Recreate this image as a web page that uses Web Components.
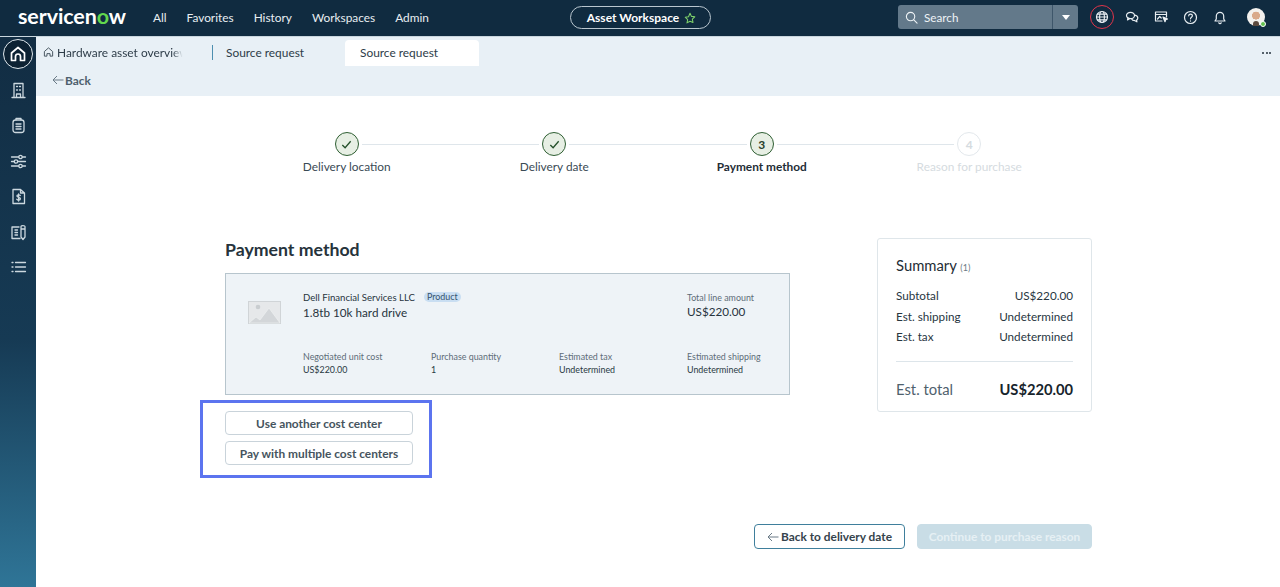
<!DOCTYPE html>
<html><head><meta charset="utf-8"><title>Payment method</title>
<style>
html,body{margin:0;height:100%;overflow:hidden;background:#fff}
body{font-family:Lato,"Liberation Sans",sans-serif;color:#293e40;display:flex;flex-direction:column;width:1280px;height:587px}
.row{display:flex;flex:1;min-height:0}
main{flex:1;display:flex;flex-direction:column;min-width:0}
</style></head><body>
<sn-header></sn-header>
<div class="row"><sn-sidebar></sn-sidebar>
<main><sn-tabs></sn-tabs><sn-stepper></sn-stepper><sn-content></sn-content></main></div>
<script>
function def(name,html){customElements.define(name,class extends HTMLElement{constructor(){super();this.attachShadow({mode:'open'}).innerHTML=html}})}
const ic='fill="none" stroke="currentColor" stroke-width="1.2" stroke-linecap="round" stroke-linejoin="round"';
def('sn-header',`<style>
:host{display:flex;align-items:center;height:36px;padding-bottom:0;background:#102b40;color:#e8eef2;flex:none;border-bottom:1px solid #c9d6de;position:relative;box-sizing:content-box}
.logo{font:700 21.500px/33px Lato,sans-serif;color:#fff;margin-left:18px;width:135px;letter-spacing:-.1px;height:36px}
.logo b{color:#62d84e;font-weight:700}
nav{display:flex;gap:20px;margin-top:-2px}nav span{white-space:nowrap;font-size:11.850px}
.ws{position:absolute;left:570px;top:6px;width:141px;height:23px;padding-left:2px;border:1px solid #b9c6cf;border-radius:12px;display:flex;align-items:center;justify-content:center;gap:5px;font-weight:700;font-size:12px;color:#fff;box-sizing:border-box}
.ws svg{color:#7fd36b}
.right{margin-left:auto;display:flex;align-items:center;margin-top:-2px}
.search{width:154px;height:24px;background:#63798a;border-radius:3px 0 0 3px;display:flex;align-items:center;gap:6px;padding-left:7px;box-sizing:border-box;font-size:11.700px;color:#eef3f6}
.dd{width:26px;height:24px;background:#63798a;border-left:1px solid #3e566a;border-radius:0 3px 3px 0;display:flex;align-items:center;justify-content:center;box-sizing:border-box;margin-right:12px}
.dd i{border:4.500px solid transparent;border-top:5px solid #fff;border-bottom:0;display:block}
.glob{width:24px;height:24px;border:1.500px solid #e0344a;border-radius:50%;box-sizing:border-box;display:flex;align-items:center;justify-content:center;margin-right:3px}
.ib{width:29.500px;display:flex;justify-content:center}
.av{width:18px;height:18px;margin:0 15px 0 12px;border-radius:50%;position:relative;background:radial-gradient(circle at 50% 42%,#d9a98a 0 28%,#f3f1ee 30%);}
.av::after{content:"";position:absolute;right:-1px;bottom:-1px;width:6px;height:6px;background:#62c04e;border-radius:50%;border:1px solid #fff;box-sizing:border-box}
.av::before{content:"";position:absolute;left:6px;bottom:0;width:6px;height:5px;background:#5c4a3e;border-radius:3px 3px 0 0}
</style>
<div class="logo">servicen<b>o</b>w</div>
<nav><span>All</span><span>Favorites</span><span>History</span><span>Workspaces</span><span>Admin</span></nav>
<div class="ws">Asset Workspace <svg width="12" height="12" viewBox="0 0 14 14" ${ic}><path d="M7 1.500l1.700 3.600 3.900.5-2.900 2.700.8 3.900L7 10.800l-3.500 1.900.8-3.900-2.900-2.700 3.900-.5z"/></svg></div>
<div class="right">
<div class="search"><svg width="13" height="13" viewBox="0 0 14 14" ${ic}><circle cx="6" cy="6" r="4.500"/><path d="M9.500 9.500L13 13"/></svg>Search</div>
<div class="dd"><i></i></div>
<div class="glob"><svg width="14" height="14" viewBox="0 0 14 14" ${ic} stroke-width="1"><circle cx="7" cy="7" r="5.500"/><ellipse cx="7" cy="7" rx="2.400" ry="5.500"/><path d="M1.500 7h11M2.300 4.200h9.400M2.300 9.800h9.400"/></svg></div>
<div class="ib"><svg width="14" height="14" viewBox="0 0 14 14" ${ic} stroke-width="1"><ellipse cx="5.500" cy="5.500" rx="4" ry="3.200"/><path d="M3 8l-.5 2 2-1.200"/><path d="M9.800 5.200c1.800.3 3 1.400 3 2.800 0 .9-.5 1.600-1.200 2.100l.3 1.700-1.900-1.100c-1.500 0-3-.7-3.500-2"/></svg></div>
<div class="ib"><svg width="15" height="14" viewBox="0 0 15 14" ${ic} stroke-width="1"><path d="M8 11H1.500V2h11v5"/><path d="M1.500 4.500h11M3.500 9l2.200-2.500 1.500 1.500"/><path d="M9 7l4.500 2-1.800.8-.7 1.900z" fill="#fff"/></svg></div>
<div class="ib"><svg width="15" height="15" viewBox="0 0 15 15" ${ic} stroke-width="1"><circle cx="7.500" cy="7.500" r="6"/><path d="M5.700 5.800c.1-2.200 3.700-2.100 3.700 0 0 1.500-1.900 1.400-1.900 3"/><path d="M7.500 10.900v.2"/></svg></div>
<div class="ib"><svg width="14" height="15" viewBox="0 0 14 15" ${ic} stroke-width="1"><path d="M2 11h10l-1.300-2V6a3.700 3.700 0 0 0-7.400 0v3z"/><path d="M5.800 12.800a1.300 1.300 0 0 0 2.400 0"/></svg></div>
<div class="av"></div>
</div>`);
const sideIcons=[
`<path d="M3.500 15.500v-14h9v14M1.500 15.500h13M6 15.500v-3.500h4v3.500M6 4.500h1M9 4.500h1M6 8h1M9 8h1" />`,
`<rect x="2.500" y="3" width="11" height="12.500" rx="2.500"/><path d="M5.500 3V1.500h5V3M5.500 7h5M5.500 9.500h5M5.500 12h5"/>`,
`<path d="M1 4h14M1 8.500h14M1 13h14"/><circle cx="10" cy="4" r="1.700" fill="#133149"/><circle cx="5.500" cy="8.500" r="1.700" fill="#133149"/><circle cx="10" cy="13" r="1.700" fill="#133149"/>`,
`<path d="M2.500 1.500h7.500l4 3.500v10.500H2.500zM10 1.500V5h4"/><path d="M9.800 7.500c-.6-1-3.400-1-3.400.6s3.500 1 3.500 2.700-3 1.600-3.700.4M8.100 6v7"/>`,
`<path d="M8.500 3H1.500v11.500h8M4.500 6h2.500M4.500 8.500h2.500M4.500 11h2.500"/><path d="M10.500 2.500c0-1.300 4-1.300 4 0V13l-2 2.500-2-2.500zM10.500 5h4"/>`,
`<path d="M5 3.500h10M5 8h10M5 12.500h10M1.500 3.500h1M1.500 8h1M1.500 12.500h1"/>`];
def('sn-sidebar',`<style>
:host{display:flex;flex-direction:column;align-items:center;width:36px;flex:none;background:linear-gradient(180deg,#122d43 0%,#163a54 55%,#2f7597 100%);color:#ccd8df;box-sizing:border-box;padding-top:2px}
.home{width:30px;height:30px;border:1px solid #dfe7ec;border-radius:50%;background:#0d2233;box-sizing:border-box;display:flex;align-items:center;justify-content:center;color:#fff;margin-bottom:12.500px}
svg{display:block;margin-bottom:18.600px;stroke-width:1.300}
.home svg{margin:0}
</style>
<div class="home"><svg width="18" height="18" viewBox="0 0 18 18" fill="none" stroke="currentColor" stroke-linejoin="round" style="stroke-width:1.700"><path d="M2.500 8L9 2.500 15.500 8v7.500h-4v-4a2.500 2.500 0 0 0-5 0v4h-4z"/></svg></div>
${sideIcons.map(p=>`<svg width="17" height="17" viewBox="0 0 16 17" ${ic}>${p}</svg>`).join('')}`);
def('sn-tabs',`<style>
:host{display:block;height:59px;background:#e8f0f6;flex:none;position:relative;font-size:11.900px;color:#2e3d49}
.bar{display:flex;height:30px;align-items:center}
.t1{width:147px;margin-left:7px;display:flex;align-items:center;gap:3px;white-space:nowrap;overflow:hidden;-webkit-mask:linear-gradient(90deg,#000 88%,transparent 95%)}
.t1 svg{flex:none}
.sep{width:1px;height:15px;background:#4d8fb0;margin-left:22px}
.t2{width:132px;padding-left:13px;white-space:nowrap;box-sizing:border-box}
.t3{width:134px;height:26px;background:#fff;border-radius:4px 4px 0 0;box-sizing:border-box;padding-left:15px;line-height:25px;align-self:flex-start;margin-top:3px}
.more{position:absolute;right:9px;top:15px;display:flex;gap:1.500px}.more i{width:2px;height:2px;background:#24323c;border-radius:50%}
.back{display:flex;align-items:center;gap:1px;margin:5px 0 0 16px;font-weight:700;font-size:11.900px;color:#4d5f6c;height:16px}
</style>
<div class="bar"><div class="t1"><svg width="11" height="12" viewBox="0 0 12 12" fill="none" stroke="#3b4a55" stroke-linejoin="round"><path d="M1.500 5.500L6 1.500l4.500 4v5h-2.800V7.800H4.300v2.700H1.500z"/></svg>Hardware asset overview</div><div class="sep"></div><div class="t2">Source request</div><div class="t3">Source request</div></div>
<div class="more"><i></i><i></i><i></i></div>
<div class="back"><svg width="12" height="10" viewBox="0 0 12 10" fill="none" stroke="#6b7b87"><path d="M11.500 5H1M5 1L1 5l4 4"/></svg>Back</div>`);
def('sn-step',`<style>
:host{display:flex;flex-direction:column;align-items:center;position:relative;font-size:11.850px;color:#3a4a55;white-space:nowrap}
.c{width:24px;height:24px;border:1.500px solid #2f5f33;background:#e7efe4;border-radius:50%;box-sizing:border-box;display:flex;align-items:center;justify-content:center;font-weight:700;font-size:12px;color:#27402a;margin-bottom:3px;position:relative;z-index:1}
:host([off]){color:#d5dbe0}:host([off]) .c{background:#fff;border-color:#e3e8ec;color:#d5dbe0}
:host([cur]){font-weight:700;color:#1f2d36}
:host([line])::after{content:"";position:absolute;left:calc(50% + 15px);width:calc(100% - 30px);top:12px;height:1px;background:#dfe6eb}
</style><div class="c"><slot name="i"></slot></div><slot></slot>`);
def('sn-stepper',`<style>
:host{display:grid;grid-template-columns:repeat(4,207.500px);justify-content:center;padding-top:36px;flex:none;height:47px;box-sizing:content-box}
</style>
<sn-step line><svg slot="i" width="13" height="13" viewBox="0 0 14 14" fill="none" stroke="#24502a" stroke-width="1.400"><path d="M2.500 7.500l3 3 6-7"/></svg>Delivery location</sn-step>
<sn-step line><svg slot="i" width="13" height="13" viewBox="0 0 14 14" fill="none" stroke="#24502a" stroke-width="1.400"><path d="M2.500 7.500l3 3 6-7"/></svg>Delivery date</sn-step>
<sn-step line cur><span slot="i">3</span>Payment method</sn-step>
<sn-step off><span slot="i">4</span>Reason for purchase</sn-step>`);
def('sn-field',`<style>:host{display:block;font-size:8.900px;line-height:13.500px;color:#5d6c77}.v{color:#293943;display:block}</style><slot></slot><span class="v"><slot name="v"></slot></span>`);
def('sn-line-card',`<style>
:host{display:block;width:565px;height:122px;box-sizing:border-box;background:#eef3f7;border:1px solid #b7c5cd;position:relative;padding:17px 0 0 22px;color:#27343d}
.top{display:flex;height:64px}
svg{margin:10px 0 0 0;flex:none}
.info{margin-left:22px;width:384px;font-size:9.600px}
.n{display:flex;align-items:center;gap:9px;height:12px}
.tag{background:#c9def2;border-radius:7px;padding:0 3px;line-height:10px;font-size:8.900px;color:#34536f}
.p{font-size:11.700px;margin-top:2px}
.tot{font-size:8.900px;color:#5d6c77;line-height:13px}.tot b{display:block;font-weight:400;font-size:11.700px;color:#27343d;line-height:15px}
.g{display:grid;grid-template-columns:repeat(4,128px);margin-left:55px;margin-top:-5.500px}
</style>
<div class="top"><svg width="33" height="23" viewBox="0 0 33 23"><rect x=".5" y=".5" width="32" height="22" fill="#e6e8ea" stroke="#d0d4d7"/><circle cx="10" cy="6" r="2.300" fill="#c9cdd0"/><path d="M1 22l7-6 4 3 9-12 11 15z" fill="#d3d6d9" stroke="#eef0f1" stroke-width=".7"/></svg>
<div class="info"><div class="n">Dell Financial Services LLC <span class="tag">Product</span></div><div class="p">1.8tb 10k hard drive</div></div>
<div class="tot">Total line amount<b>US$220.00</b></div></div>
<div class="g"><sn-field>Negotiated unit cost<span slot="v">US$220.00</span></sn-field><sn-field>Purchase quantity<span slot="v">1</span></sn-field><sn-field>Estimated tax<span slot="v">Undetermined</span></sn-field><sn-field>Estimated shipping<span slot="v">Undetermined</span></sn-field></div>`);
def('sn-btn',`<style>
:host{display:flex;align-items:center;justify-content:center;gap:2px;box-sizing:border-box;height:24px;border:1px solid #c9d3da;border-radius:4px;background:#fff;font-weight:700;font-size:11.900px;color:#46545e;white-space:nowrap}
:host([back]){border-color:#3f7f9c;height:25px;color:#35434c}
:host([dis]){background:#c9dde6;border-color:#c9dde6;color:#e6f0f4;height:25px}
</style><slot></slot>`);
def('sn-summary',`<style>
:host{display:block;width:215px;height:174px;box-sizing:border-box;border:1px solid #dfe6ea;border-radius:3px;background:#fff;padding:16px 18px 0;font-size:11.700px;color:#28363f}
h3{margin:0 0 7px;font-weight:400;font-size:14.800px;line-height:20px;color:#1f2d36}h3 small{font-size:9px;color:#6c7a84}
.r{display:flex;justify-content:space-between;line-height:20.500px;height:20.500px}
hr{border:0;border-top:1px solid #dde5ea;margin:14.500px 0 18px}
.t{display:flex;justify-content:space-between;align-items:center;font-size:14.800px;color:#4f616d}.t b{font-size:14.700px;color:#17242c}
</style>
<h3>Summary <small>(1)</small></h3>
<div class="r"><span>Subtotal</span><span>US$220.00</span></div>
<div class="r"><span>Est. shipping</span><span>Undetermined</span></div>
<div class="r"><span>Est. tax</span><span>Undetermined</span></div>
<hr><div class="t"><span>Est. total</span><b>US$220.00</b></div>`);
def('sn-content',`<style>
:host{display:block;width:867px;margin:59px 0 0 189px;position:relative}
.cols{display:flex;justify-content:space-between;align-items:flex-start}
h2{margin:0 0 11px;font-size:17.700px;line-height:24px;font-weight:700;color:#26333c}
.acts{display:flex;flex-direction:column;gap:6px;width:188px;margin-top:16px;position:relative}
.hl{position:absolute;left:-25px;top:-11px;width:232px;height:78px;box-sizing:border-box;border:3px solid #5c74ef;pointer-events:none}
.foot{display:flex;justify-content:flex-end;gap:12px;margin-top:59px}
.foot sn-btn[back]{width:151px}.foot sn-btn[dis]{width:175px}
</style>
<div class="cols"><div class="l"><h2>Payment method</h2><sn-line-card></sn-line-card>
<div class="acts"><sn-btn>Use another cost center</sn-btn><sn-btn>Pay with multiple cost centers</sn-btn><div class="hl"></div></div></div>
<sn-summary></sn-summary></div>
<div class="foot"><sn-btn back><svg width="12" height="10" viewBox="0 0 12 10" fill="none" stroke="#6b7b87"><path d="M11.500 5H1M5 1L1 5l4 4"/></svg>Back to delivery date</sn-btn><sn-btn dis>Continue to purchase reason</sn-btn></div>`);
</script>
</body></html>
